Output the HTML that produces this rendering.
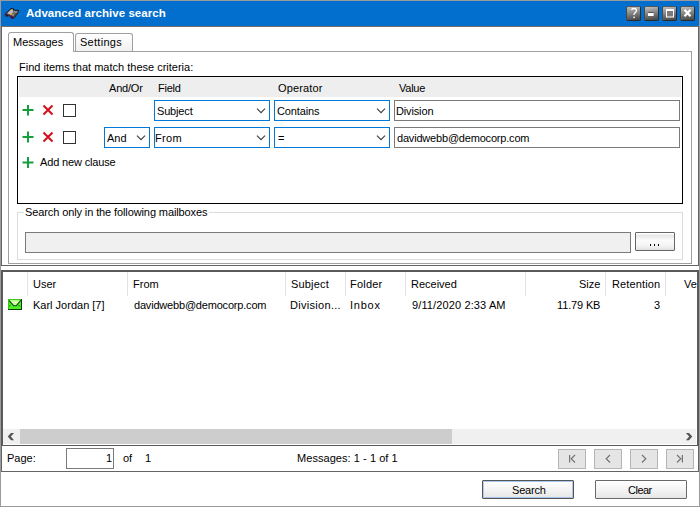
<!DOCTYPE html>
<html><head><meta charset="utf-8">
<style>
*{box-sizing:border-box;margin:0;padding:0}
html,body{width:700px;height:507px;overflow:hidden;background:#fff}
body{position:relative;font-family:"Liberation Sans",sans-serif;font-size:11px;color:#000}
.a{position:absolute}
.t{position:absolute;white-space:nowrap;line-height:13px;font-size:11px}
.win{left:0;top:0;width:700px;height:507px;border:1px solid #9a9a9a;background:#fff}
.title{left:1px;top:1px;width:698px;height:25px;background:#026ecd}
.wb{position:absolute;top:6px;width:15px;height:15px;border-radius:2px;background:linear-gradient(170deg,#c2c2c2,#a0a0a0 25%,#666 70%,#444);border:1px solid #2a2a2a;border-top-color:#555;border-left-color:#484848}
.pane{left:1px;top:26px;width:698px;height:240px;border:1px solid #646464;border-top-color:#7a6f66}
.tabpanel{left:8px;top:51px;width:684px;height:213px;border:1px solid #a0a0a0}
.crit{left:17px;top:76px;width:666px;height:128px;border:1px solid #000}
.hdr{left:19px;top:77px;width:662px;height:20px;background:#eeeeee}
.cb{position:absolute;height:21px;border:1px solid #0078d7;background:#fff}
.tb{position:absolute;height:21px;border:1px solid #7a7a7a;background:#fff}
.chk{position:absolute;width:13px;height:13px;border:1px solid #333;background:#fff}
.chev{position:absolute;width:9px;height:5px}
.grp{left:17px;top:212px;width:666px;height:48px;border:1px solid #dcdcdc}
.grid{left:1px;top:270px;width:698px;height:176px;border:2px solid #5a5a5a;border-bottom-width:1px}
.sep{position:absolute;top:272px;width:1px;height:24px;background:#e3e3e3}
.pager{left:1px;top:445px;width:698px;height:27px;border:1px solid #646464;border-top:0}
.nb{position:absolute;top:449px;width:28px;height:20px;background:#e5e5e5;border:1px solid #b5b5b5}
.btn{position:absolute;top:480px;width:92px;height:19px;border:1px solid #6a6a6a;border-radius:1px;background:linear-gradient(#ffffff,#f4f4f4 50%,#e6e6e6)}
</style></head><body>
<div class="a win"></div>
<div class="a title"></div>
<!-- binoculars icon -->
<svg class="a" style="left:2px;top:4px" width="22" height="18" viewBox="0 0 22 18">
  <path d="M3 10.3 L8.9 4.6 L11 4.3 L11.7 6 L16.7 6.4 L16.3 8.5 L13.8 11.7 L11.7 14.5 L9.2 14.2 L7.4 11.3 L4.6 12.4 L3.2 11.3 Z" fill="#4a4a4a" stroke="#1a1614" stroke-width="0.9"/>
  <path d="M5 9.6 L9 5.4 L10.6 5.3 L11.2 7 L10.5 9.5 L8 10.2 Z" fill="#bdbdbd"/>
  <path d="M11.2 7 L15.8 7.2 L15.2 8.6 L12 9.8 Z" fill="#8e8e8e"/>
  <path d="M10.5 9.5 L12 9.8 L11.6 12.5 L10 12 Z" fill="#9a9a9a"/>
  <ellipse cx="5" cy="11.1" rx="1.7" ry="1.05" fill="#1e1420" stroke="#6c2c88" stroke-width="0.6" transform="rotate(35 5 11.1)"/>
  <ellipse cx="10.3" cy="13.1" rx="1.7" ry="1.05" fill="#1e1420" stroke="#6c2c88" stroke-width="0.6" transform="rotate(35 10.3 13.1)"/>
  <rect x="7.9" y="9.7" width="2.3" height="1.3" fill="#f5a000"/>
</svg>
<div class="wb" style="left:626px"></div>
<div class="wb" style="left:644px"></div>
<div class="wb" style="left:662px"></div>
<div class="wb" style="left:680px"></div>
<svg class="a" style="left:0;top:0" width="700" height="26">
  <path d="M631.5 10 Q632 8.5 634 8.5 Q636.5 8.5 636.5 10.5 Q636.5 12 634.8 13 Q634 13.6 634 15" fill="none" stroke="#fff" stroke-width="1.3"/>
  <rect x="633.4" y="16.6" width="1.4" height="1.5" fill="#fff"/>
  <rect x="648" y="13" width="5.6" height="3" fill="#fff"/>
  <rect x="648" y="12.4" width="5.6" height="0.6" fill="#333"/>
  <rect x="666.5" y="9.5" width="7" height="7.5" fill="#7a7a7a" stroke="#fff" stroke-width="1"/>
  <rect x="666" y="9" width="8" height="2" fill="#fff"/>
  <path d="M684.5 9.8 L690.5 16.2 M690.5 9.8 L684.5 16.2" stroke="#fff" stroke-width="2.2"/>
</svg>

<div class="a pane"></div>
<div class="a tabpanel"></div>
<!-- tabs -->
<div class="a" style="left:8px;top:32px;width:66px;height:20px;border:1px solid #a0a0a0;border-bottom:0;border-radius:3px 3px 0 0;background:#fff"></div>
<div class="a" style="left:75px;top:33px;width:58px;height:18px;border:1px solid #a0a0a0;border-bottom:0;border-radius:3px 3px 0 0;background:linear-gradient(#fff,#f0f0f0)"></div>

<div class="a crit"></div>
<div class="a hdr"></div>


<!-- row icons -->
<svg class="a" style="left:0;top:0" width="700" height="507">
  <g fill="#14a03c">
    <rect x="22.5" y="109" width="11" height="2"/><rect x="27" y="105" width="2" height="10.5"/>
    <rect x="22.5" y="136" width="11" height="2"/><rect x="27" y="131.5" width="2" height="11"/>
    <rect x="22.5" y="161.5" width="11" height="2"/><rect x="27" y="157" width="2" height="11"/>
  </g>
  <g stroke="#d4101c" stroke-width="2" stroke-linecap="butt">
    <path d="M43.5 105.5 L52.5 114.5 M52.5 105.5 L43.5 114.5"/>
    <path d="M43.5 132.5 L52.5 141.5 M52.5 132.5 L43.5 141.5"/>
  </g>
</svg>
<div class="chk" style="left:63px;top:104px"></div>
<div class="chk" style="left:63px;top:131px"></div>
<div class="cb" style="left:154px;top:100px;width:116px"></div>
<div class="cb" style="left:274px;top:100px;width:116px"></div>
<div class="tb" style="left:394px;top:100px;width:286px"></div>
<div class="cb" style="left:104px;top:127px;width:46px"></div>
<div class="cb" style="left:154px;top:127px;width:116px"></div>
<div class="cb" style="left:274px;top:127px;width:116px"></div>
<div class="tb" style="left:394px;top:127px;width:286px"></div>
<svg class="a" style="left:0;top:0" width="700" height="507">
  <g fill="none" stroke="#404040" stroke-width="1.15">
    <path d="M257 108.6 L261 112.6 L265 108.6"/>
    <path d="M377 108.6 L381 112.6 L385 108.6"/>
    <path d="M137 135.6 L141 139.6 L145 135.6"/>
    <path d="M257 135.6 L261 139.6 L265 135.6"/>
    <path d="M377 135.6 L381 139.6 L385 135.6"/>
  </g>
</svg>

<div class="a grp"></div>
<div class="a" style="left:24px;top:205px;width:185px;height:14px;background:#fff"></div>
<div class="tb" style="left:25px;top:232px;width:606px;background:#f0f0f0"></div>
<div class="a" style="left:635px;top:232px;width:40px;height:19px;border:1px solid #666;border-radius:1px;background:linear-gradient(#fff 0,#fff 1px,#e6e6e6 2px,#fbfbfb 45%,#f4f4f4 75%,#e2e2e2)"></div>

<!-- grid -->
<div class="a grid"></div>
<div class="sep" style="left:27px"></div>
<div class="sep" style="left:127px"></div>
<div class="sep" style="left:285px"></div>
<div class="sep" style="left:345px"></div>
<div class="sep" style="left:405px"></div>
<div class="sep" style="left:525px"></div>
<div class="sep" style="left:605px"></div>
<div class="sep" style="left:665px"></div>
<svg class="a" style="left:8px;top:299px" width="14" height="11" viewBox="0 0 14 11">
  <rect x="0" y="0" width="14" height="11" fill="#0e3a0c"/>
  <rect x="1" y="1" width="12" height="9" fill="#4cf024"/>
  <rect x="1" y="0" width="12" height="1" fill="#3cd01c"/>
  <rect x="0" y="0" width="1" height="10" fill="#38c81a"/>
  <path d="M1.5 1.2 L12.5 1.2 L8 6.5 L6 6.5 Z" fill="#d2ffaa"/>
  <path d="M1 1.6 L5.8 6.8 L8.2 6.8 L13 1" fill="none" stroke="#123c10" stroke-width="1.1"/>
  <path d="M10.4 5.8 L12 7.6" fill="none" stroke="#1a5a14" stroke-width="0.9"/>
  <path d="M1 7.5 L2.8 6" fill="none" stroke="#1a5a14" stroke-width="0.7"/>
</svg>
<!-- scrollbar -->
<div class="a" style="left:3px;top:429px;width:693px;height:15px;background:#f0f0f0"></div>
<div class="a" style="left:20px;top:429px;width:432px;height:15px;background:#cdcdcd"></div>
<svg class="a" style="left:0;top:0" width="700" height="507">
  <path d="M11 433 H14.1 L10.8 436.6 L14.1 440.2 H11 L7.7 436.6 Z" fill="#555"/>
  <path d="M689 433 H685.9 L689.2 436.6 L685.9 440.2 H689 L692.3 436.6 Z" fill="#555"/>
</svg>
<!-- pager -->
<div class="a pager"></div>
<div class="tb" style="left:66px;top:448px;width:48px"></div>
<div class="nb" style="left:558px"></div>
<div class="nb" style="left:594px"></div>
<div class="nb" style="left:630px"></div>
<div class="nb" style="left:666px"></div>
<!-- buttons -->
<div class="btn" style="left:482px;border-color:#555;box-shadow:inset 1px 0 0 #b0ccee,inset 0 0 0 1px #a8c6ec"></div>
<div class="btn" style="left:595px"></div>
<div class="a" style="left:650px;top:244px;width:1px;height:2px;background:#000"></div>
<div class="a" style="left:654px;top:244px;width:1px;height:2px;background:#000"></div>
<div class="a" style="left:658px;top:244px;width:1px;height:2px;background:#000"></div>
<svg class="a" style="left:0;top:440px" width="700" height="35">
  <g fill="none" stroke="#747474" stroke-width="1.2">
    <path d="M569.6 15 V22.5 M575 15 L571.2 18.8 L575 22.5"/>
    <path d="M610 15 L606.2 18.8 L610 22.5"/>
    <path d="M642 15 L645.8 18.8 L642 22.5"/>
    <path d="M677 15 L680.8 18.8 L677 22.5 M682.4 15 V22.5"/>
  </g>
</svg>
<div class="t" style="left:26.00px;top:7px;letter-spacing:0.045px;color:#fff;font-weight:bold;font-size:11.5px">Advanced archive search</div>
<div class="t" style="left:13.00px;top:36px">Messages</div>
<div class="t" style="left:80.00px;top:36px;letter-spacing:0.286px">Settings</div>
<div class="t" style="left:19.00px;top:61px">Find items that match these criteria:</div>
<div class="t" style="left:109.00px;top:82px;letter-spacing:-0.200px">And/Or</div>
<div class="t" style="left:158.00px;top:82px;letter-spacing:-0.250px">Field</div>
<div class="t" style="left:278.00px;top:82px;letter-spacing:0.143px">Operator</div>
<div class="t" style="left:399.00px;top:82px;letter-spacing:-0.250px">Value</div>
<div class="t" style="left:157.00px;top:105px;letter-spacing:-0.167px">Subject</div>
<div class="t" style="left:277.00px;top:105px;letter-spacing:-0.143px">Contains</div>
<div class="t" style="left:396.00px;top:105px;letter-spacing:-0.143px">Division</div>
<div class="t" style="left:107.00px;top:132px">And</div>
<div class="t" style="left:155.00px;top:132px;letter-spacing:0.333px">From</div>
<div class="t" style="left:278.00px;top:132px">=</div>
<div class="t" style="left:397.00px;top:132px;letter-spacing:-0.190px">davidwebb@democorp.com</div>
<div class="t" style="left:40.00px;top:156px;letter-spacing:-0.154px">Add new clause</div>
<div class="t" style="left:25.00px;top:206px;letter-spacing:-0.108px">Search only in the following mailboxes</div>
<div class="t" style="left:33.00px;top:278px">User</div>
<div class="t" style="left:133.00px;top:278px">From</div>
<div class="t" style="left:291.00px;top:278px;letter-spacing:0.167px">Subject</div>
<div class="t" style="left:350.00px;top:278px;letter-spacing:0.200px">Folder</div>
<div class="t" style="left:411.00px;top:278px">Received</div>
<div class="t" style="left:579.00px;top:278px">Size</div>
<div class="t" style="left:612.00px;top:278px;letter-spacing:0.125px">Retention</div>
<div class="t" style="left:684.00px;top:278px">Ve</div>
<div class="t" style="left:33.00px;top:299px">Karl Jordan [7]</div>
<div class="t" style="left:134.00px;top:299px;letter-spacing:-0.190px">davidwebb@democorp.com</div>
<div class="t" style="left:290.00px;top:299px;letter-spacing:0.300px">Division...</div>
<div class="t" style="left:350.00px;top:299px;letter-spacing:0.750px">Inbox</div>
<div class="t" style="left:412.00px;top:299px;letter-spacing:0.125px">9/11/2020 2:33 AM</div>
<div class="t" style="left:557.00px;top:299px;letter-spacing:-0.143px">11.79 KB</div>
<div class="t" style="left:654.00px;top:299px">3</div>
<div class="t" style="left:7.00px;top:452px">Page:</div>
<div class="t" style="left:106.00px;top:452px">1</div>
<div class="t" style="left:123.00px;top:452px">of</div>
<div class="t" style="left:145.00px;top:452px">1</div>
<div class="t" style="left:297.00px;top:452px;letter-spacing:0.053px">Messages: 1 - 1 of 1</div>
<div class="t" style="left:512.00px;top:484px;letter-spacing:-0.200px">Search</div>
<div class="t" style="left:628.00px;top:484px;letter-spacing:-0.500px">Clear</div>
</body></html>
